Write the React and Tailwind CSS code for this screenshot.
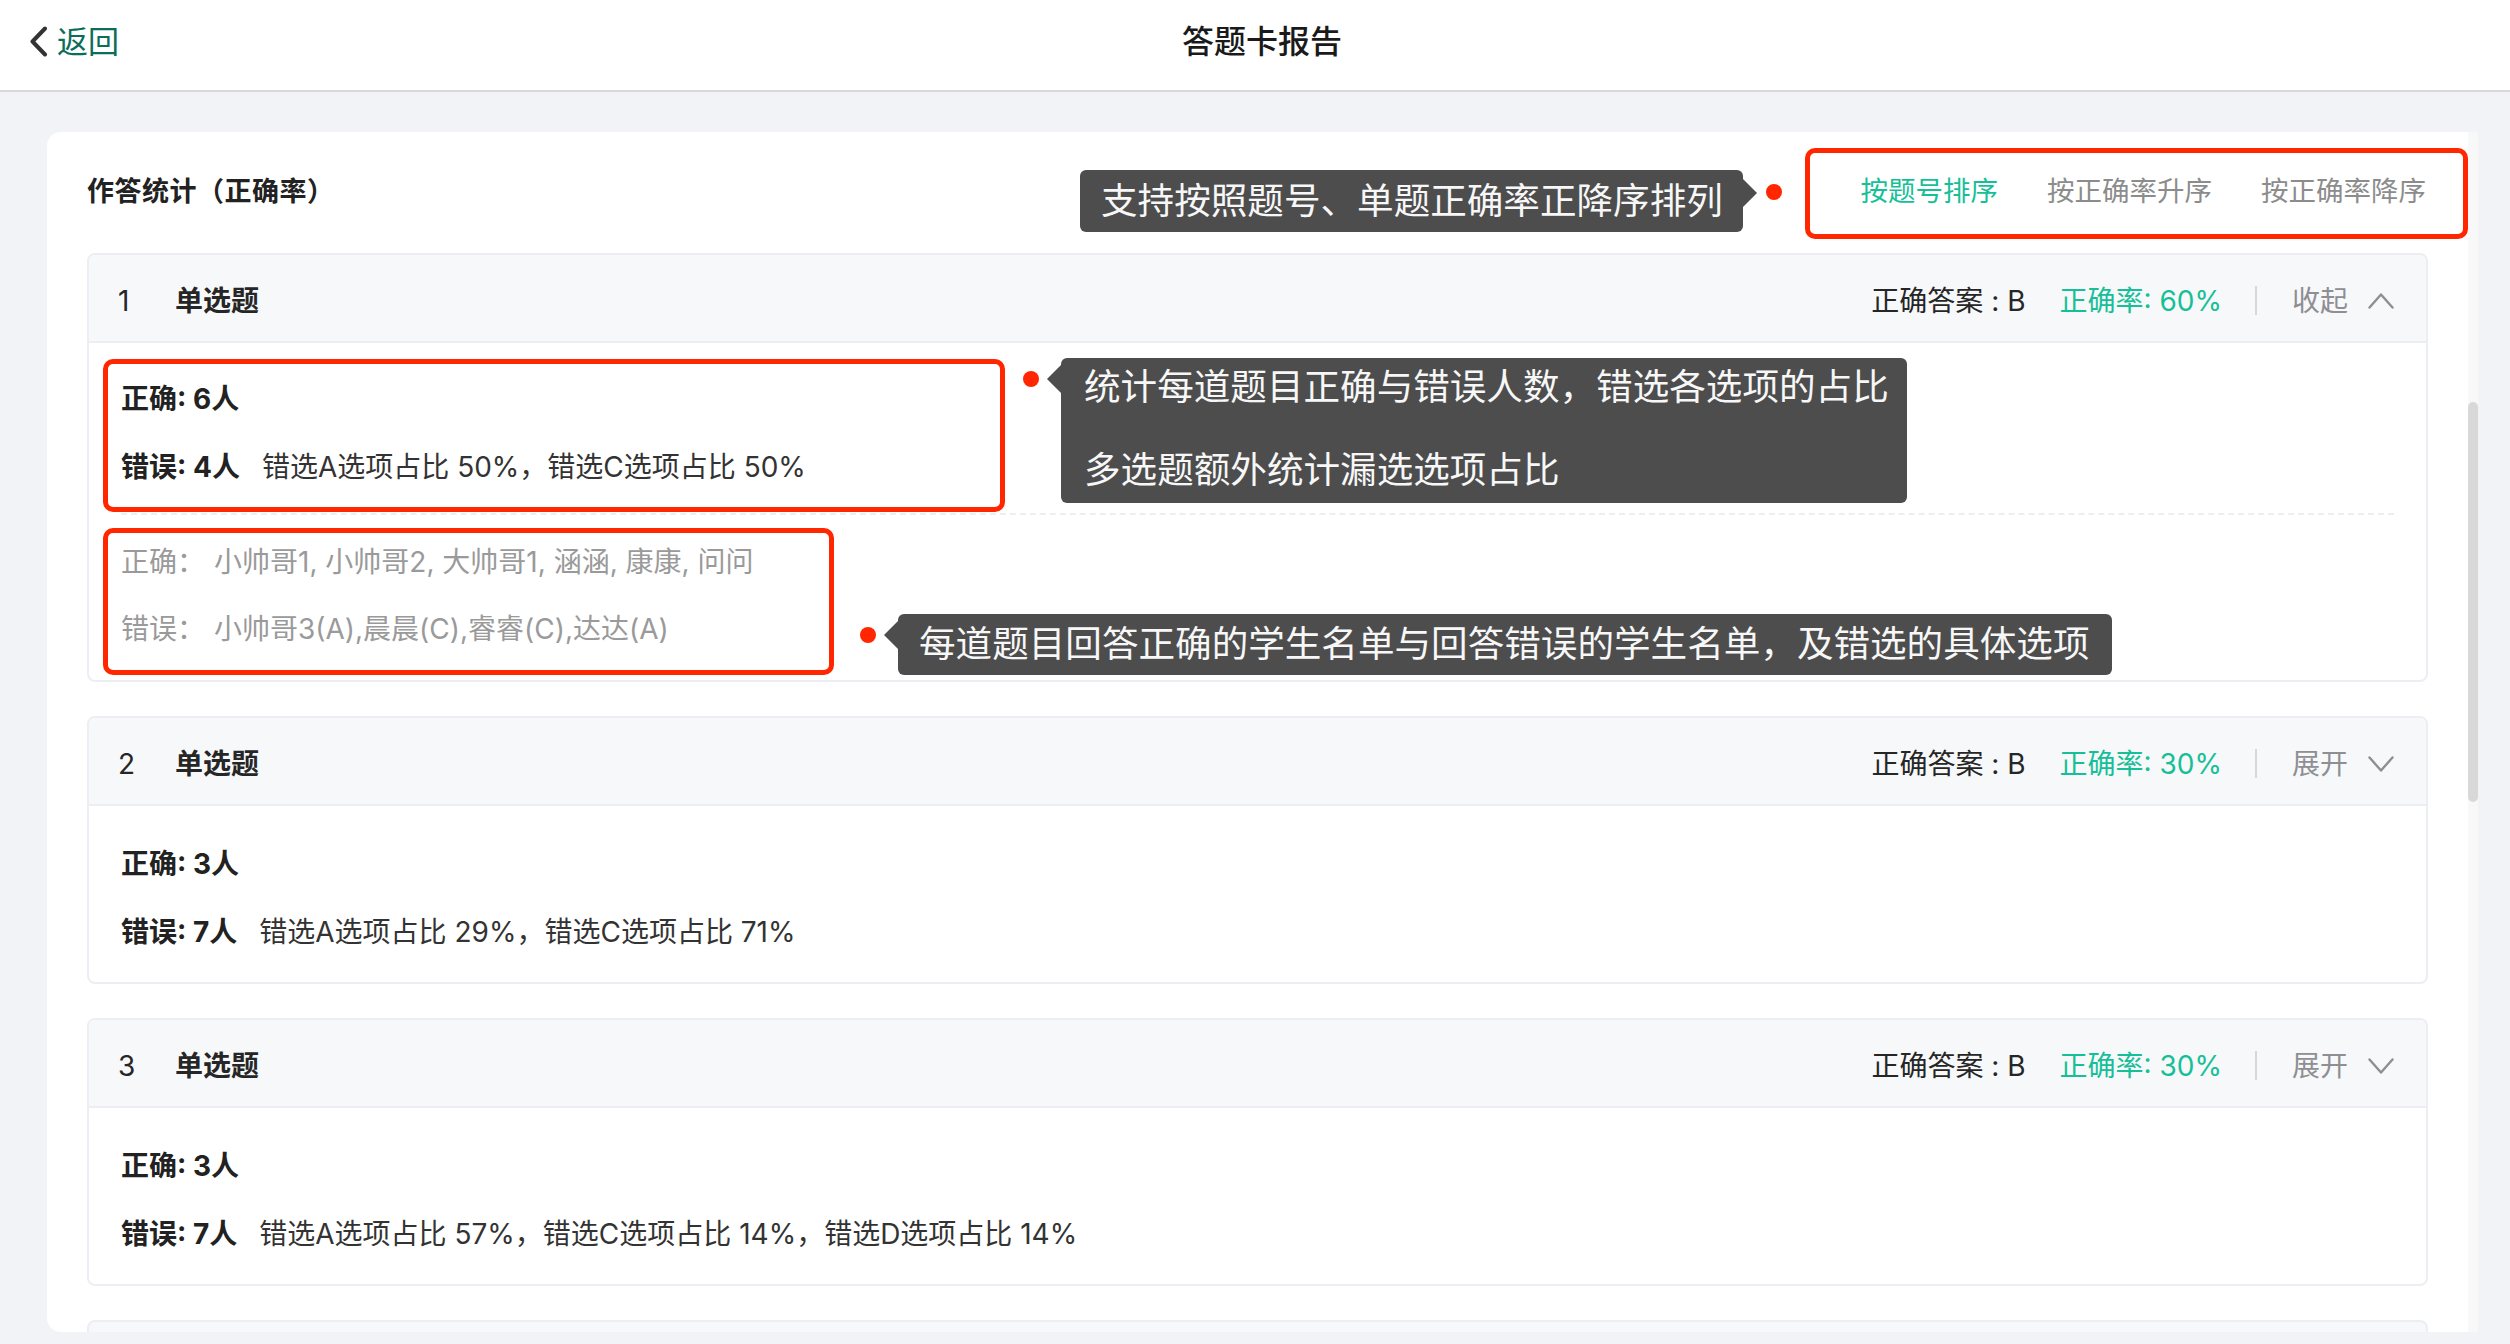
import React from 'react';

const QUESTIONS = [
  {
    no: 1,
    type: '单选题',
    answer: 'B',
    rate: '60%',
    open: true,
    right: 6,
    wrong: 4,
    detail: '错选A选项占比 50%，错选C选项占比 50%',
    rightNames: '小帅哥1, 小帅哥2, 大帅哥1, 涵涵, 康康, 问问',
    wrongNames: '小帅哥3(A),晨晨(C),睿睿(C),达达(A)',
  },
  { no: 2, type: '单选题', answer: 'B', rate: '30%', open: false, right: 3, wrong: 7, detail: '错选A选项占比 29%，错选C选项占比 71%' },
  { no: 3, type: '单选题', answer: 'B', rate: '30%', open: false, right: 3, wrong: 7, detail: '错选A选项占比 57%，错选C选项占比 14%，错选D选项占比 14%' },
];

function Chevron({ up }) {
  return (
    <svg width="26" height="16" viewBox="0 0 26 16" fill="none" stroke="#8e8e93" strokeWidth="2.4" strokeLinecap="round" strokeLinejoin="round">
      {up ? <polyline points="1.5,14.5 13,1.5 24.5,14.5" /> : <polyline points="1.5,1.5 13,14.5 24.5,1.5" />}
    </svg>
  );
}

function QuestionCard({ q }) {
  return (
    <div className="rounded-[8px] border-2 border-[#eceef3] bg-white shrink-0">
      <div className="h-[88px] pt-[5px] flex items-center justify-between bg-[#f7f8fa] border-b-2 border-[#eceef3] rounded-t-[6px] pl-[29px] pr-[32px] text-[28px]">
        <div className="flex items-center">
          <span className="w-[57px] text-[#262626]">{q.no}</span>
          <span className="font-bold text-[#262626]">{q.type}</span>
        </div>
        <div className="flex items-center">
          <span className="text-[#262626]">正确答案 : {q.answer}</span>
          <span className="ml-[34px] text-[#17bf98]">正确率: {q.rate}</span>
          <span className="ml-[33px] w-[2px] h-[29px] bg-[#d5d8de]" />
          <span className="ml-[35px] text-[#8e8e93]">{q.open ? '收起' : '展开'}</span>
          <span className="ml-[20px] flex items-center">
            <Chevron up={q.open} />
          </span>
        </div>
      </div>
      <div className="px-[32px] text-[28px] leading-[40px]">
        <div className={`flex flex-col gap-[28px] ${q.open ? 'pt-[36px] pb-[26px] border-b-2 border-dashed border-[#eceef3]' : 'pt-[38px] pb-[30px]'}`}>
          <div className="font-bold text-[#222]">正确: {q.right}人</div>
          <div className="text-[#333]">
            <span className="font-bold text-[#222]">错误: {q.wrong}人</span>
            <span className="ml-[22px]">{q.detail}</span>
          </div>
        </div>
        {q.open && (
          <div className="flex flex-col gap-[27px] pt-[27px] pb-[31px] text-[#9a9a9a]">
            <div>
              <span className="inline-block w-[93px]">正确：</span>
              {q.rightNames}
            </div>
            <div>
              <span className="inline-block w-[93px]">错误：</span>
              {q.wrongNames}
            </div>
          </div>
        )}
      </div>
    </div>
  );
}

export default function App() {
  return (
    <div className="relative w-[2510px] h-[1344px] overflow-hidden flex flex-col bg-[#f2f3f6] font-[family-name:Inter,'Noto_Sans_CJK_SC',sans-serif]">
      {/* top bar */}
      <div className="h-[92px] shrink-0 bg-white border-b-2 border-[#d9d9d9] pb-[7px] grid grid-cols-[1fr_auto_1fr] items-center">
        <div className="flex items-center pl-[29px]">
          <svg width="19" height="31" viewBox="0 0 19 31" fill="none" stroke="#333" strokeWidth="4" strokeLinecap="round" strokeLinejoin="round">
            <polyline points="16,2.5 3.5,15.5 16,28.5" />
          </svg>
          <span className="ml-[9px] text-[31px] leading-none text-[#0b6e5a]">返回</span>
        </div>
        <div className="ml-[14px] text-[32px] font-medium leading-none text-[#1a1a1a]">答题卡报告</div>
        <div />
      </div>

      {/* page */}
      <div className="flex-1 min-h-0 pt-[40px] pl-[47px] pr-[32px] pb-[12px] flex">
        <div className="flex-1 min-w-0 flex bg-white rounded-l-[14px] overflow-hidden">
          <div className="flex-1 min-w-0 flex flex-col px-[40px] overflow-hidden">
            <div className="shrink-0 h-[84px] mt-[18px] mb-[19px] flex items-center justify-between">
              <div className="text-[27px] font-bold text-[#222] tracking-[0.5px]">作答统计（正确率）</div>
              <div className="flex items-center gap-[49px] text-[27.5px] pr-[2px]">
                <span className="text-[#17bf98]">按题号排序</span>
                <span className="text-[#8c8c8c]">按正确率升序</span>
                <span className="text-[#8c8c8c]">按正确率降序</span>
              </div>
            </div>
            <div className="flex flex-col gap-[34px]">
              {QUESTIONS.map(q => <QuestionCard key={q.no} q={q} />)}
              {/* next card, only its top edge is in view */}
              <div className="h-[88px] shrink-0 rounded-t-[8px] border-2 border-[#eceef3] bg-[#f7f8fa]" />
            </div>
          </div>
          {/* scrollbar */}
          <div className="w-[10px] shrink-0 bg-[#f8f8f9] flex flex-col">
            <div className="h-[270px] shrink-0" />
            <div className="h-[400px] rounded-full bg-[#d8d8d8]" />
          </div>
        </div>
      </div>

      {/* annotations */}
      <div className="absolute left-[1805px] top-[148px] w-[663px] h-[91px] rounded-[10px] border-[5px] border-[#ff2600]" />
      <div className="absolute left-[103px] top-[359px] w-[902px] h-[153px] rounded-[10px] border-[5px] border-[#ff2600]" />
      <div className="absolute left-[103px] top-[528px] w-[731px] h-[147px] rounded-[10px] border-[5px] border-[#ff2600]" />

      <div className="absolute left-[1080px] top-[170px] w-[663px] h-[62px] rounded-[6px] bg-[#4d4d4d] pl-[21px] flex items-center text-[36.6px] text-[#f7f7f7] whitespace-nowrap">
        支持按照题号、单题正确率正降序排列
        <div className="absolute right-[-14px] top-[9px] w-0 h-0 border-y-[14px] border-y-transparent border-l-[14px] border-l-[#4d4d4d]" />
      </div>
      <div className="absolute left-[1766px] top-[184px] w-[16px] h-[16px] rounded-full bg-[#ff2600]" />

      <div className="absolute left-[1061px] top-[358px] w-[846px] h-[145px] rounded-[6px] bg-[#4d4d4d] pl-[23px] pt-[8px] flex flex-col gap-[41px] text-[36.6px] leading-[42px] text-[#f7f7f7] whitespace-nowrap">
        <div>统计每道题目正确与错误人数，错选各选项的占比</div>
        <div>多选题额外统计漏选选项占比</div>
        <div className="absolute left-[-14px] top-[7px] w-0 h-0 border-y-[14px] border-y-transparent border-r-[14px] border-r-[#4d4d4d]" />
      </div>
      <div className="absolute left-[1023px] top-[371px] w-[16px] h-[16px] rounded-full bg-[#ff2600]" />

      <div className="absolute left-[898px] top-[614px] w-[1214px] h-[61px] rounded-[6px] bg-[#4d4d4d] pl-[21px] flex items-center text-[36.6px] text-[#f7f7f7] whitespace-nowrap">
        每道题目回答正确的学生名单与回答错误的学生名单，及错选的具体选项
        <div className="absolute left-[-14px] top-[7px] w-0 h-0 border-y-[14px] border-y-transparent border-r-[14px] border-r-[#4d4d4d]" />
      </div>
      <div className="absolute left-[860px] top-[627px] w-[16px] h-[16px] rounded-full bg-[#ff2600]" />
    </div>
  );
}
